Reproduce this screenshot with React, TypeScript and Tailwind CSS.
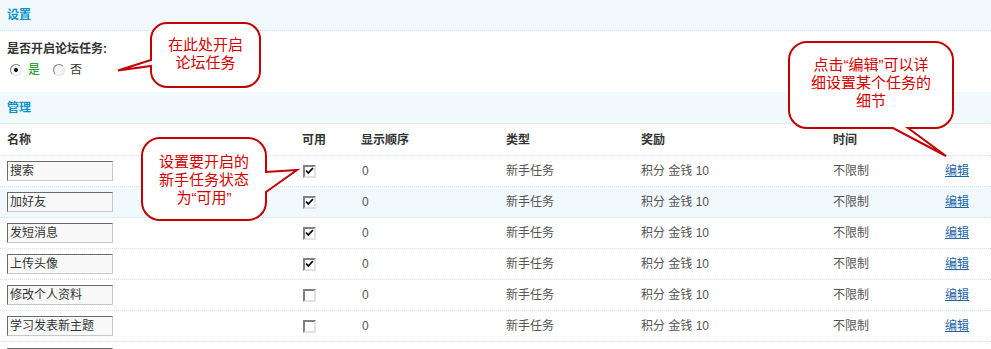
import React from "react";

const TASKS = [
  { name: "搜索", on: true },
  { name: "加好友", on: true, hover: true },
  { name: "发短消息", on: true },
  { name: "上传头像", on: true },
  { name: "修改个人资料", on: false },
  { name: "学习发表新主题", on: false },
];

const COLS = "grid grid-cols-[295px_59px_145px_135px_192px_112px_1fr] items-center pl-[7px]";

function Radio({ on }: { on: boolean }) {
  return (
    <span className="flex h-[12px] w-[12px] items-center justify-center rounded-full border border-t-[#808080] border-l-[#808080] border-b-[#e4e4e4] border-r-[#e4e4e4] bg-[#f7f7f7]">
      {on && <span className="h-[4px] w-[4px] rounded-full bg-black" />}
    </span>
  );
}

function Check({ on }: { on: boolean }) {
  return (
    <span className="ml-px flex h-[13px] w-[13px] items-center justify-center border-2 border-t-[#808080] border-l-[#808080] border-b-[#e2e2e2] border-r-[#e2e2e2] bg-white">
      {on && (
        <svg width="9" height="8" viewBox="0 0 9 8">
          <path d="M1 3.5 L3.3 6 L8 1" stroke="#000" strokeWidth="1.8" fill="none" />
        </svg>
      )}
    </span>
  );
}

function Partition({ title, tall }: { title: string; tall?: boolean }) {
  return (
    <div
      className={`flex ${tall ? "h-[32px]" : "h-[31px]"} items-center border-b border-dotted border-[#cfe3f3] bg-[#f2f9fd] pl-[7px] text-[12px] font-bold text-[#0a93c9]`}
    >
      {title}
    </div>
  );
}

function NameBox({ name }: { name: string }) {
  return (
    <span className="flex h-[20px] w-[106px] items-center border border-t-[#6a6a6a] border-l-[#6a6a6a] border-b-[#c8c8c8] border-r-[#c8c8c8] bg-[#f9f9f9] pl-[2px] text-[#333]">
      {name}
    </span>
  );
}

function Callouts() {
  return (
    <>
      <svg
        className="pointer-events-none absolute inset-0"
        width="991"
        height="349"
        viewBox="0 0 991 349"
      >
        <g fill="#fff" stroke="#c40000" strokeWidth="2" strokeLinejoin="miter">
          <path d="M167 23 H244 A16 16 0 0 1 260 39 V71 A16 16 0 0 1 244 87 H167 A16 16 0 0 1 151 71 V66 L118 70.5 L151 60 V39 A16 16 0 0 1 167 23 Z" />
          <path d="M807 42 H935 A18 18 0 0 1 953 60 V110 A18 18 0 0 1 935 128 H908 L946 156 L893 128 H807 A18 18 0 0 1 789 110 V60 A18 18 0 0 1 807 42 Z" />
          <path d="M160 138 H248 A18 18 0 0 1 266 156 V172 L297 170 L266 192 V202 A18 18 0 0 1 248 220 H160 A18 18 0 0 1 142 202 V156 A18 18 0 0 1 160 138 Z" />
        </g>
      </svg>
      <div className="absolute left-[151px] top-[36px] w-[109px] text-center text-[15px] leading-[18px] text-[#d40000]">
        在此处开启
        <br />
        论坛任务
      </div>
      <div className="absolute left-[789px] top-[56px] w-[164px] text-center text-[15px] leading-[18px] text-[#d40000]">
        点击“编辑”可以详
        <br />
        细设置某个任务的
        <br />
        细节
      </div>
      <div className="absolute left-[142px] top-[153px] w-[124px] text-center text-[15px] leading-[18px] text-[#d40000]">
        设置要开启的
        <br />
        新手任务状态
        <br />
        为“可用”
      </div>
    </>
  );
}

export default function App() {
  return (
    <div className="relative h-[349px] w-[991px] overflow-hidden bg-white font-['Liberation_Sans','Noto_Sans_CJK_SC',sans-serif] text-[12px] leading-[18px] text-[#555]">
      <Partition title="设置" />
      <div className="flex h-[61px] flex-col pt-[9px]">
        <div className="pl-[7px] font-bold text-[#333]">是否开启论坛任务:</div>
        <div className="mt-[3px] flex items-center pl-[10px]">
          <Radio on />
          <span className="ml-[6px] text-[#009900]">是</span>
          <span className="ml-[13px]">
            <Radio on={false} />
          </span>
          <span className="ml-[5px] text-[#333]">否</span>
        </div>
      </div>
      <Partition title="管理" tall />
      <div className={`${COLS} h-[32px] border-b border-dotted border-[#cfe3f3] font-bold text-[#333]`}>
        <span>名称</span>
        <span>可用</span>
        <span>显示顺序</span>
        <span>类型</span>
        <span>奖励</span>
        <span>时间</span>
        <span />
      </div>
      {TASKS.map((t) => (
        <div
          key={t.name}
          className={`${COLS} h-[31px] border-b border-dotted border-[#cfe3f3] ${t.hover ? "bg-[#f2f9fd]" : "bg-white"}`}
        >
          <NameBox name={t.name} />
          <Check on={t.on} />
          <span className="pl-px">0</span>
          <span>新手任务</span>
          <span>积分 金钱 10</span>
          <span>不限制</span>
          <a href="#" className="text-[#2366a8] underline">
            编辑
          </a>
        </div>
      ))}
      <div className={`${COLS} h-[31px]`}>
        <NameBox name="" />
      </div>
      <Callouts />
    </div>
  );
}
